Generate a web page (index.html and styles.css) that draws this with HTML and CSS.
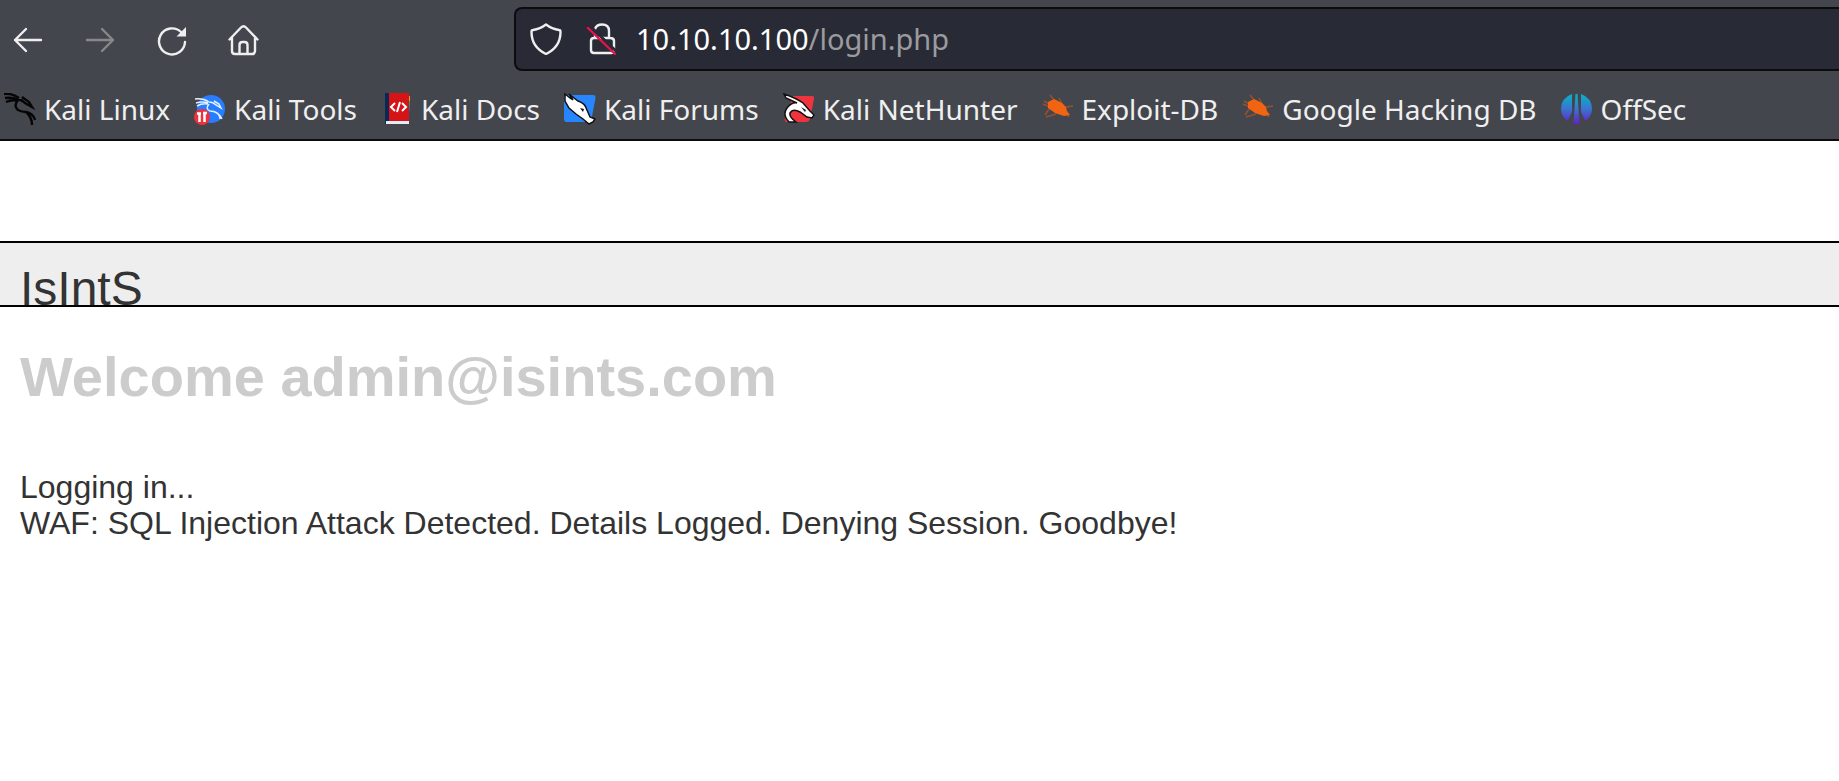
FILE: index.html
```html
<!DOCTYPE html>
<html lang="en">
<head>
<meta charset="utf-8">
<title>IsIntS</title>
<link rel="stylesheet" href="styles.css">
</head>
<body>
<header class="chrome">
  <div class="toolbar">
    <nav class="controls" aria-label="Navigation">
      <button type="button" class="control" aria-label="Back"><svg viewBox="0 0 32 32"><path d="M29 16H3M14 5 3 16l11 11"/></svg></button>
      <button type="button" class="control" aria-label="Forward" disabled><svg viewBox="0 0 32 32"><path d="M3 16h26M18 5l11 11-11 11"/></svg></button>
      <button type="button" class="control" aria-label="Reload"><svg viewBox="0 0 32 32"><path d="M25 8A13 13 0 1 0 29 18"/><path class="solid" d="M30 3v9.500H20.500z"/></svg></button>
      <button type="button" class="control" aria-label="Home"><svg viewBox="0 0 32 32"><path d="M1.500 15.500 13 3.500q2.500-2.500 5 0L29.500 15.500M4 14v13q0 3 3 3h17q3 0 3-3V14M11.500 30V21q0-3 3-3h2q3 0 3 3v9"/></svg></button>
    </nav>
    <form class="address">
      <svg class="address-icon shield" viewBox="0 0 32 32"><path d="M16 1.500q6 4.500 13 5.500 1.500 0 1.500 2 0 15-14.500 22Q1.500 24 1.500 9q0-2 1.500-2 7-1 13-5.500z"/></svg>
      <svg class="address-icon lock" viewBox="0 0 32 32"><path d="M9 6q1.500-4.500 7-4.500Q23 1.500 23 8v7M10 15h14q4 0 4 3v9q0 3-3 3H8q-3 0-3-3v-9q0-3 3-3M9 15v-3"/><path class="strike-gap" d="M4 3 32 30"/><path class="strike" d="M2 5 29 31"/></svg>
      <div class="url" role="textbox" aria-label="Address" contenteditable="true" spellcheck="false">10.10.10.100<span class="url-path">/login.php</span></div>
    </form>
  </div>
  <nav class="bookmarks" aria-label="Bookmarks">
    <a class="bookmark" href="#"><svg viewBox="0 0 32 32"><path class="dragon" d="M0 1q8-1 15 4M1 5q8-1 13 2M2 9q6-3 12-1M14 6q4 1 7 4l7 4-3-5-7-5M14 7q-5 6 0 10 4 2 8 2 7 1 9 8M22 19q6 5 6 13"/></svg>Kali Linux</a>
    <a class="bookmark" href="#"><svg viewBox="0 0 32 32"><circle cx="17" cy="16" r="14" fill="#277dff"/><path class="dragon light" d="M1 6q8-1 14 3M2 10q6-2 12 0M3 13q5-3 11-2M15 9q4 0 7 3l5 3-2-4-5-3M15 11q-4 5 1 7 8 0 12 8M21 19q5 2 5 7"/><circle cx="8" cy="24" r="8" fill="#ef3038"/><path d="M3 20.500h4M5.500 20v9M9 20h4M10.500 20v9" fill="none" stroke="#fff" stroke-width="2.500"/></svg>Kali Tools</a>
    <a class="bookmark" href="#"><svg viewBox="0 0 32 32"><path fill="#0d2755" d="M4 0h5v31H4z"/><path fill="#d51418" d="M8 0h20v28H8z"/><path fill="#e6edf2" d="M5 28h23v3H5z"/><path fill="#e89b20" d="M28 3h1v5h-1z"/><path fill="#18a268" d="M28 8h1v5h-1z"/><path fill="#2268b8" d="M28 13h1v5h-1z"/><path d="M14 10l-4 4 4 4M21 10l4 4-4 4M19 9l-3 10" fill="none" stroke="#fff" stroke-width="2"/></svg>Kali Docs</a>
    <a class="bookmark" href="#"><svg viewBox="0 0 32 32"><path fill="#2786ff" d="M4 2h25q3 0 2.500 3l-4 21q-.500 3-4 3H3q-3 0-3-3V4z"/><path class="head" d="M1 1l5 4 3 2-4-6 9 7q7 2 9 9l3 7 5 2-2 3-4 2-6-5-7-5-7-6-4-7z"/><path fill="#111" d="M16 15l4 1-1 3z"/></svg>Kali Forums</a>
    <a class="bookmark" href="#"><svg viewBox="0 0 32 32"><path fill="#ef343d" d="M10 3h19q2.500 0 2 3l-4 20q-1 3-4 3H4q-3 0-2-4z"/><path class="head" d="M1 1q12 4 19 9l7 8 4 4-2 3-5-1-7-5q-7-4-10 1-1 4 6 9H6Q-1 22 4 15q5-6 10-5L3 5z"/><path fill="#111" d="M18 14l5 3-1 2z"/></svg>Kali NetHunter</a>
    <a class="bookmark" href="#"><svg viewBox="0 0 32 32"><path class="bug-legs" d="M8 2l5 6M2 8l9 5M1 11l10 4M17 5l3 6M24 14l7-1M7 16l-4 6M14 21l-10 3M24 20l3 4"/><path class="bug" d="M6 9l6-3 8 4 4 4 1 4 3 4-6 1-9-3-7-5z"/></svg>Exploit-DB</a>
    <a class="bookmark" href="#"><svg viewBox="0 0 32 32"><path class="bug-legs" d="M8 2l5 6M2 8l9 5M1 11l10 4M17 5l3 6M24 14l7-1M7 16l-4 6M14 21l-10 3M24 20l3 4"/><path class="bug" d="M6 9l6-3 8 4 4 4 1 4 3 4-6 1-9-3-7-5z"/></svg>Google Hacking DB</a>
    <a class="bookmark" href="#"><svg viewBox="0 0 32 32"><defs><linearGradient id="offsec" x1="0" y1="0" x2="0" y2="32" gradientUnits="userSpaceOnUse"><stop offset="0" stop-color="#04b9c7"/><stop offset=".5" stop-color="#3974cf"/><stop offset="1" stop-color="#681bc8"/></linearGradient></defs><path fill="url(#offsec)" d="M11 1v18L6.500 28Q0 23 0 16 0 5 11 1zM20 1v18l4.500 9Q31 23 31 16 31 5 20 1zM14.500 1h2l2 30h-6z"/></svg>OffSec</a>
  </nav>
</header>
<main class="page">
  <div class="banner">IsIntS</div>
  <h1 class="welcome">Welcome admin@isints.com</h1>
  <p class="message">Logging in...<br>WAF: SQL Injection Attack Detected. Details Logged. Denying Session. Goodbye!</p>
</main>
</body>
</html>
```
FILE: styles.css
```css
* { box-sizing: border-box; }
body {
  margin: 0;
  background: #fff;
  color: #333;
  font-family: "Liberation Sans", Arial, sans-serif;
  font-size: 32px;
  line-height: 36px;
  overflow-x: hidden;
}
.chrome {
  background: #44464d;
  border-bottom: 2px solid #0c0c0f;
  color: #efefef;
  font-family: "Noto Sans", sans-serif;
}
.toolbar {
  display: flex;
  align-items: center;
  gap: 254px;
  padding: 7px 0 8px 12px;
}
.controls { display: flex; gap: 40px; padding-top: 2px; }
.control {
  display: block;
  width: 32px;
  height: 32px;
  padding: 0;
  border: 0;
  background: none;
  color: #efefef;
}
.control:disabled { color: #87888b; }
.control svg, .address-icon {
  display: block;
  width: 32px;
  height: 32px;
  fill: none;
  stroke: currentColor;
  stroke-width: 2.4;
  stroke-linecap: round;
  stroke-linejoin: round;
}
.control .solid { fill: currentColor; stroke: none; }
.address {
  display: flex;
  flex: 1;
  align-items: center;
  height: 64px;
  padding-left: 14px;
  border: 2px solid #0c0c0f;
  border-right: 0;
  border-radius: 8px 0 0 8px;
  background: #282a35;
}
.address-icon { flex: none; }
.shield { margin-right: 24px; }
.lock { margin-right: 18px; }
.address-icon .strike-gap { stroke: #282a35; stroke-width: 3; }
.address-icon .strike { stroke: #e5134a; }
.url { flex: 1; color: #fff; font-size: 29px; white-space: nowrap; outline: 0; }
.url-path { color: #9b9b9f; }
.bookmarks {
  display: flex;
  align-items: center;
  gap: 24px;
  height: 60px;
  padding-left: 4px;
}
.bookmark {
  display: flex;
  align-items: center;
  gap: 8px;
  color: inherit;
  font-size: 28px;
  text-decoration: none;
  white-space: nowrap;
}
.bookmark svg { flex: none; width: 32px; height: 32px; }
.dragon { fill: none; stroke: #050505; stroke-width: 2.4; }
.dragon.light { stroke: #e4f0ff; stroke-width: 1.5; }
.head { fill: #fff; stroke: #111; stroke-width: 1.5; }
.bug { fill: #f26411; }
.bug-legs { fill: none; stroke: #96502f; stroke-width: 1.5; }
.page { padding-top: 100px; }
.banner {
  height: 66px;
  padding: 18px 20px 0;
  border: solid #000;
  border-width: 2px 0;
  background: #eee;
  font-size: 48px;
  line-height: 56px;
  overflow: hidden;
}
.welcome {
  margin: 38px 20px 60px;
  color: #ccc;
  font-size: 56px;
  line-height: 64px;
}
.message { margin: 0 20px; }
```
